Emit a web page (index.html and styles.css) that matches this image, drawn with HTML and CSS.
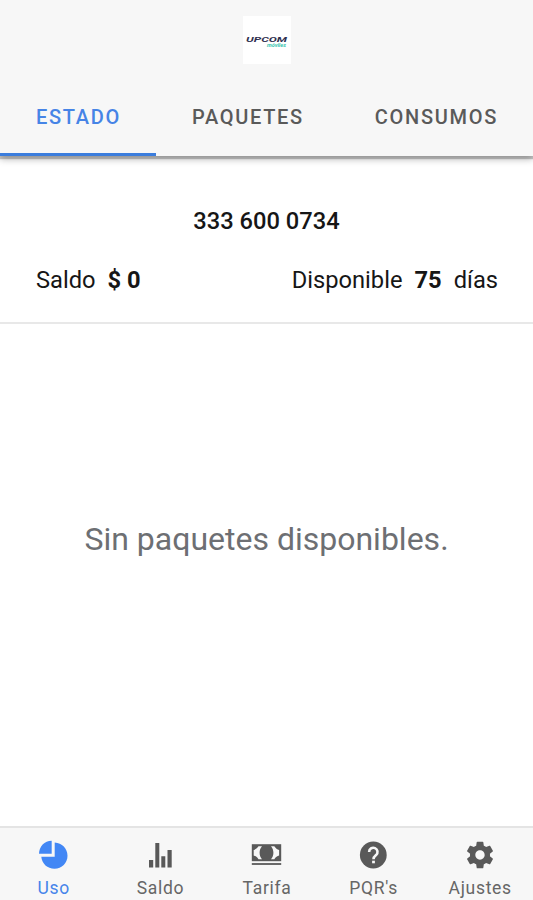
FILE: index.html
```html
<!DOCTYPE html>
<html lang="es">
<head>
    <meta charset="UTF-8">
    <meta name="viewport" content="width=device-width, initial-scale=1.0">
    <title>Estado</title>
    <link rel="stylesheet" href="styles.css">
</head>
<body>

    <header class="header">
        <div class="logo">
            <svg width="48" height="48" viewBox="0 0 48 48">
                <text class="logoName" x="3" y="25.500" textLength="41" lengthAdjust="spacingAndGlyphs">UPCOM</text>
                <text class="logoSub" x="24" y="31" textLength="19" lengthAdjust="spacingAndGlyphs">móviles</text>
            </svg>
        </div>
        <nav class="tabs">
            <a class="tab active">ESTADO</a>
            <a class="tab">PAQUETES</a>
            <a class="tab">CONSUMOS</a>
        </nav>
    </header>

    <section class="account">
        <div class="phone">333 600 0734</div>
        <div class="balance">
            <div class="item"><span>Saldo</span><b>$ 0</b></div>
            <div class="item"><span>Disponible</span><b>75</b><span>días</span></div>
        </div>
    </section>

    <main class="content">
        <p class="empty">Sin paquetes disponibles.</p>
    </main>

    <footer class="tabBar">
        <a class="barItem active">
            <svg class="icon" viewBox="0 0 32 32">
                <path d="M14.700 1.700v13.100H2C2 7.500 7.500 1.700 14.700 1.700z"/>
                <path d="M17.700 3.500C25 4 30.500 9.500 30.500 16.700c0 7.300-5.700 13-13 13-7 0-12.600-5-13.200-12h13.400z"/>
            </svg>
            <span>Uso</span>
        </a>
        <a class="barItem">
            <svg class="icon" viewBox="0 0 32 32">
                <path d="M5 21h4.200v7.500H5zM11.300 4h4v24.500h-4zM17.300 17.200h4v11.300h-4zM23.500 11h4.200v17.500h-4.200z"/>
            </svg>
            <span>Saldo</span>
        </a>
        <a class="barItem">
            <svg class="icon" viewBox="0 0 32 32">
                <path d="M1.800 5.200h29.400v17H1.800z"/>
                <path d="M1.800 24.100h29.400v1.800H1.800z"/>
                <path class="cut" d="M12 7.300C8.800 10.800 8.800 16.700 12 20.200H8.500C7.200 18.200 5.500 17 3.700 16.500V11C5.500 10.500 7.200 9.300 8.500 7.300zM21 7.300c3.200 3.500 3.200 9.400 0 12.900h3.300c1.300-2 3-3.200 4.800-3.700V11c-1.800-.5-3.500-1.700-4.800-3.700z"/>
            </svg>
            <span>Tarifa</span>
        </a>
        <a class="barItem">
            <svg class="icon" viewBox="0 0 32 32">
                <circle cx="16.300" cy="16" r="13.400"/>
                <path class="stroke" d="M12.100 13a4.200 4.200 0 1 1 7 3.100c-1.700 1.400-2.600 2-2.600 4.100"/>
                <path class="cut" d="M15.100 21.700h2.800v2.600h-2.800z"/>
            </svg>
            <span>PQR's</span>
        </a>
        <a class="barItem">
            <svg class="icon" viewBox="0 0 24 24">
                <path d="M19.430 12.980c.04-.32.07-.64.07-.98s-.03-.66-.07-.98l2.110-1.650c.19-.15.24-.42.12-.64l-2-3.460c-.12-.22-.39-.3-.61-.22l-2.490 1c-.52-.4-1.080-.73-1.690-.98l-.38-2.650C14.460 2.180 14.250 2 14 2h-4c-.25 0-.46.18-.49.420l-.38 2.650c-.61.25-1.170.59-1.690.98l-2.490-1c-.23-.09-.49 0-.61.22l-2 3.460c-.13.22-.07.49.12.64l2.110 1.650c-.04.32-.07.65-.07.98s.03.66.07.98l-2.110 1.650c-.19.15-.24.42-.12.64l2 3.460c.12.22.39.3.61.22l2.490-1c.52.4 1.080.73 1.690.98l.38 2.650c.03.24.24.42.49.42h4c.25 0 .46-.18.49-.42l.38-2.650c.61-.25 1.170-.59 1.690-.98l2.490 1c.23.09.49 0 .61-.22l2-3.460c.12-.22.07-.49-.12-.64l-2.110-1.650zM12 15.500c-1.930 0-3.500-1.570-3.500-3.500s1.570-3.500 3.500-3.500 3.500 1.570 3.500 3.500-1.570 3.500-3.500 3.500z"/>
            </svg>
            <span>Ajustes</span>
        </a>
    </footer>

</body>
</html>
```
FILE: styles.css
```css
* {
    box-sizing: border-box;
}
body {
    margin: 0;
    height: 100vh;
    display: flex;
    flex-direction: column;
    font-family: Roboto, sans-serif;
    background: #fff;
    color: #161616;
    overflow: hidden;
}
.header {
    height: 156px;
    padding-top: 16px;
    background: #f7f7f7;
    box-shadow: 0 3px 1px rgba(0, 0, 0, 0.2), 0 3px 7px rgba(0, 0, 0, 0.3);
    display: flex;
    flex-direction: column;
    align-items: center;
}
.logo {
    width: 48px;
    height: 48px;
    background: #fff;
}
.logo svg {
    display: block;
}
.logoName {
    font-size: 8px;
    font-weight: 700;
    font-style: italic;
    fill: #30304f;
}
.logoSub {
    font-size: 4.5px;
    font-weight: 700;
    font-style: italic;
    fill: #39c4ae;
}
.tabs {
    display: flex;
    width: 100%;
    margin-top: 14px;
    height: 78px;
}
.tab {
    flex: 1 1 auto;
    padding: 26px 0 0 1px;
    line-height: 26px;
    text-align: center;
    font-size: 20px;
    font-weight: 500;
    letter-spacing: 1.7px;
    color: #5a5a5a;
    border-bottom: 3px solid transparent;
}
.tab.active {
    color: #4684e6;
    border-bottom-color: #3b7ddd;
}
.account {
    height: 168px;
    padding: 50px 36px 0;
    border-bottom: 2px solid #e8e8e8;
    font-size: 23.7px;
    line-height: 30px;
}
.phone {
    text-align: center;
    font-weight: 500;
}
.balance {
    display: flex;
    justify-content: space-between;
    margin-top: 29px;
    margin-right: -1px;
}
.item {
    display: flex;
    gap: 12px;
}
.content {
    flex: 1;
    display: flex;
    align-items: center;
    justify-content: center;
    padding-bottom: 72px;
}
.empty {
    margin: 0;
    font-size: 32px;
    color: #6d6f73;
}
.tabBar {
    display: flex;
    height: 74px;
    background: #f7f7f7;
    border-top: 2px solid #e4e4e4;
}
.barItem {
    flex: 1;
    display: flex;
    flex-direction: column;
    align-items: center;
    padding-top: 11px;
    font-size: 17.5px;
    line-height: 22px;
    letter-spacing: 0.7px;
    color: #666;
}
.barItem span {
    padding-left: 1px;
}
.barItem.active {
    color: #4684ea;
}
.icon {
    width: 32px;
    height: 32px;
    margin-bottom: 6px;
    fill: #595959;
}
.active .icon {
    fill: #4287f5;
}
.icon .cut {
    fill: #f7f7f7;
}
.icon .stroke {
    fill: none;
    stroke: #f7f7f7;
    stroke-width: 2.6;
}
```
